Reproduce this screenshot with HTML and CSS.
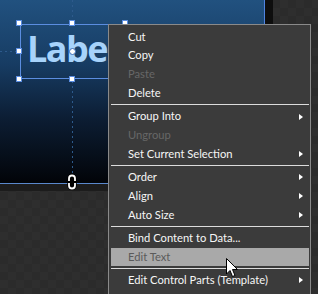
FILE: index.html
```html
<!DOCTYPE html>
<html>
<head>
<meta charset="utf-8">
<link rel="stylesheet" href="styles.css">
</head>
<body>
<div class="stage">
  <div class="artboard">
    <div class="guide-v top"></div>
    <div class="guide-v bottom"></div>
    <div class="guide-h"></div>
    <div class="label-box">
      <span class="label-text">Label</span>
    </div>
    <span class="handle" style="left:16px;top:20px"></span>
    <span class="handle" style="left:69px;top:20px"></span>
    <span class="handle" style="left:122px;top:20px"></span>
    <span class="handle" style="left:16px;top:48px"></span>
    <span class="handle" style="left:16px;top:76px"></span>
    <span class="handle" style="left:69px;top:76px"></span>
    <span class="center-dot"></span>
  </div>
  <svg class="grip" width="10" height="16" viewBox="0 0 10 16">
    <path d="M2 7 V4.5 a3 3 0 0 1 6 0 V7 Z" fill="#000" stroke="#000" stroke-width="3.5" stroke-linejoin="round"/>
    <path d="M2 9 V11.5 a3 3 0 0 0 6 0 V9 Z" fill="#000" stroke="#000" stroke-width="3.5" stroke-linejoin="round"/>
    <path d="M2 7 V4.5 a3 3 0 0 1 6 0 V7" fill="none" stroke="#fff" stroke-width="1.8"/>
    <path d="M2 9 V11.5 a3 3 0 0 0 6 0 V9" fill="none" stroke="#fff" stroke-width="1.8"/>
  </svg>
</div>

<div class="menu">
  <div class="item">Cut</div>
  <div class="item">Copy</div>
  <div class="item disabled">Paste</div>
  <div class="item">Delete</div>
  <div class="sep"></div>
  <div class="item">Group Into<span class="arrow"></span></div>
  <div class="item disabled">Ungroup</div>
  <div class="item">Set Current Selection<span class="arrow"></span></div>
  <div class="sep"></div>
  <div class="item">Order<span class="arrow"></span></div>
  <div class="item">Align<span class="arrow"></span></div>
  <div class="item">Auto Size<span class="arrow"></span></div>
  <div class="sep"></div>
  <div class="item">Bind Content to Data...</div>
  <div class="item hover">Edit Text</div>
  <div class="sep"></div>
  <div class="item">Edit Control Parts (Template)<span class="arrow"></span></div>
</div>

<svg class="cursor" width="14" height="22" viewBox="0 0 14 22">
  <path d="M0.5 0.5 L0.5 16 L4 12.5 L6.5 18.5 L9 17.5 L6.5 11.5 L11.5 11.5 Z" fill="#fff" stroke="#000" stroke-width="1" stroke-linejoin="miter"/>
</svg>
</body>
</html>
```

FILE: styles.css
```css
html, body {
  margin: 0;
  padding: 0;
  overflow: hidden;
}
body {
  width: 318px;
  height: 294px;
  position: relative;
  background-color: #2b2b2b;
  background-image:
    linear-gradient(45deg, #2e2e2e 25%, transparent 25%, transparent 75%, #2e2e2e 75%),
    linear-gradient(45deg, #2e2e2e 25%, transparent 25%, transparent 75%, #2e2e2e 75%);
  background-size: 16px 16px;
  background-position: 0 0, 8px 8px;
  font-family: Lato, "Open Sans", sans-serif;
}
.stage {
  position: relative;
  width: 265px;
  height: 184px;
  border-right: 8px solid #0e0e0e;
  border-bottom: 7px solid #1c1c1c;
}
.artboard {
  position: relative;
  width: 264px;
  height: 183px;
  border-right: 1px solid #4f83e0;
  border-bottom: 1px solid #5a88cc;
  background: linear-gradient(to bottom, #21517f 0%, #173c63 35%, #0c1d33 65%, #020408 100%);
  overflow: hidden;
}
.guide-v {
  position: absolute;
  left: 72px;
  width: 1px;
  background-image: linear-gradient(to bottom, #2d5a8c 50%, transparent 50%);
  background-size: 1px 5px;
}
.guide-v.top { top: 0; height: 20px; }
.guide-v.bottom { top: 81px; height: 93px; }
.guide-h {
  position: absolute;
  left: 0;
  top: 51px;
  width: 16px;
  height: 1px;
  background-image: linear-gradient(to right, #2d5a8c 50%, transparent 50%);
  background-size: 5px 1px;
}
.label-box {
  position: absolute;
  left: 20px;
  top: 24px;
  width: 104px;
  height: 53px;
  border: 1px solid #5b8de0;
}
.label-text {
  position: absolute;
  left: 6px;
  top: -1px;
  font-family: "Open Sans", "Noto Sans", sans-serif;
  font-weight: 700;
  font-size: 36px;
  line-height: 50px;
  letter-spacing: -1.5px;
  color: #a7d3fb;
  white-space: nowrap;
}
.handle {
  position: absolute;
  width: 4px;
  height: 4px;
  background: #fff;
  border: 1px solid #5b8de0;
}
.center-dot {
  position: absolute;
  left: 69px;
  top: 48px;
  width: 5px;
  height: 5px;
  border-radius: 50%;
  background: #fff;
  border: 1px solid #3b6db8;
}
.grip {
  position: absolute;
  left: 67px;
  top: 174px;
}
.menu {
  position: absolute;
  left: 108px;
  top: 24px;
  width: 198px;
  height: 268px;
  border: 1px solid #8a8a8a;
  border-bottom: none;
  background: #3b3b3b;
  padding: 2.6px 1px 0 2px;
  box-sizing: content-box;
}
.item {
  height: 18.8px;
  line-height: 18.8px;
  font-size: 11.2px;
  color: #f6f6f6;
  padding-left: 17px;
  padding-right: 6px;
  display: flex;
  align-items: center;
  justify-content: space-between;
  white-space: nowrap;
}
.item.disabled {
  color: #676767;
}
.item.hover {
  background: #a9a9a9;
  color: #5a5a5a;
}
.sep {
  height: 4.4px;
  display: flex;
  align-items: center;
}
.sep::before {
  content: "";
  display: block;
  width: 100%;
  height: 1px;
  background: #dcdcdc;
}
.arrow {
  width: 0;
  height: 0;
  border-left: 4px solid #fff;
  border-top: 3.5px solid transparent;
  border-bottom: 3.5px solid transparent;
}
.cursor {
  position: absolute;
  left: 226px;
  top: 258px;
}
```
